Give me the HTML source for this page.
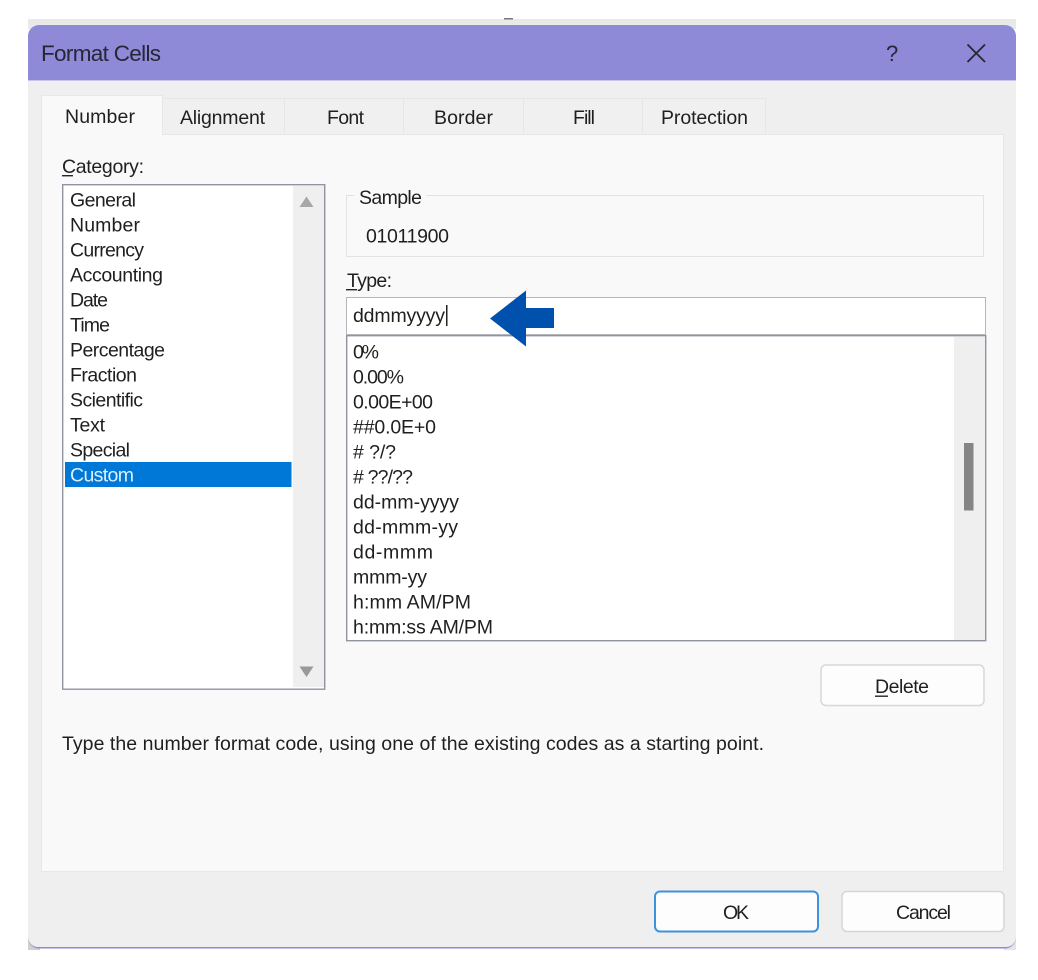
<!DOCTYPE html>
<html lang="en">
<head>
<meta charset="utf-8">
<title>Format Cells</title>
<style>
html,body{margin:0;padding:0;background:#fff;width:1038px;height:980px;overflow:hidden}
svg{display:block}
text{font-family:"Liberation Sans",Arial,sans-serif;font-size:19.5px;fill:#1f1f1f}
.t{filter:blur(.3px)}
</style>
</head>
<body>
<svg width="1038" height="980" viewBox="0 0 1038 980" xmlns="http://www.w3.org/2000/svg">
<!-- back strip -->
<rect x="28" y="19" width="988" height="10" fill="#e9e9e9"/>
<rect x="504" y="18" width="9" height="1.500" fill="#777"/>
<!-- dialog -->
<rect x="28" y="938" width="12" height="12" fill="#cfcfcf"/>
<rect x="1004" y="938" width="12" height="12" fill="#e4e4e4"/>
<rect x="28" y="25" width="988" height="923.500" rx="11" fill="#8f8ad8"/>
<path d="M28 80H1016V937a10 10 0 0 1-10 10H38a10 10 0 0 1-10-10Z" fill="#efefef"/>
<rect x="28" y="80" width="988" height="1" fill="#c9c6ec"/>
<!-- tab pane -->
<rect x="41.500" y="134.500" width="962" height="737" fill="#f9f9f9" stroke="#e8e8e8"/>
<!-- tabs -->
<g fill="#f0f0f0" stroke="#e6e6e6">
<rect x="162.500" y="98.500" width="122" height="36"/>
<rect x="284.500" y="98.500" width="119" height="36"/>
<rect x="403.500" y="98.500" width="120" height="36"/>
<rect x="523.500" y="98.500" width="119" height="36"/>
<rect x="642.500" y="98.500" width="123" height="36"/>
</g>
<path d="M42 136V95H162V136Z" fill="#f9f9f9"/>
<path d="M41.500 135V95.500H162.500V134" fill="none" stroke="#e8e8e8"/>
<!-- category list -->
<rect x="62.700" y="184.700" width="262" height="504.500" fill="#fff" stroke="#8f94a0" stroke-width="1.400"/>
<rect x="293" y="186" width="31" height="501" fill="#efefef"/>
<path d="M306.500 196.500L313.500 207H299.500Z" fill="#a8a8a8"/>
<path d="M299.500 666.500H313.500L306.500 677Z" fill="#999"/>
<rect x="65" y="462" width="226.500" height="25" fill="#0078d7"/>
<!-- sample -->
<rect x="346.500" y="195.500" width="637" height="61" fill="none" stroke="#e3e3e3"/>
<rect x="354" y="190" width="72" height="12" fill="#f9f9f9"/>
<!-- type input -->
<rect x="346.500" y="297.500" width="639" height="37" fill="#fff" stroke="#b5b7bc"/>
<rect x="446" y="305" width="1.500" height="21" fill="#222"/>
<!-- type list -->
<rect x="346.700" y="335.700" width="639" height="305" fill="#fff" stroke="#8f94a0" stroke-width="1.400"/>
<rect x="954" y="337" width="31" height="303" fill="#efefef"/>
<rect x="964" y="443" width="9.500" height="67.500" fill="#858585"/>
<!-- arrow -->
<path d="M490 318.500L526 290.500V308H554V328H526V346.500Z" fill="#0050ae"/>
<!-- buttons -->
<rect x="821" y="665" width="163" height="40.500" rx="5" fill="#fdfdfd" stroke="#d8d8d8" stroke-width="1.500"/>
<rect x="655" y="891.500" width="163" height="40" rx="5" fill="#fdfdfd" stroke="#3d92dc" stroke-width="2"/>
<rect x="842" y="891.500" width="162" height="40" rx="5" fill="#fdfdfd" stroke="#d6d6d6" stroke-width="1.500"/>
<!-- close icon -->
<path d="M967.500 44.500L985 62M985 44.500L967.500 62" fill="none" stroke="#262636" stroke-width="1.800"/>
<g class="t">
<text x="41" y="61" style="font-size:22.500px;fill:#262636" textLength="120" lengthAdjust="spacing">Format Cells</text>
<text x="886" y="61" style="font-size:22px;fill:#262636">?</text>
<text x="65" y="123" textLength="70" lengthAdjust="spacing">Number</text>
<text x="180" y="124" textLength="85" lengthAdjust="spacing">Alignment</text>
<text x="327" y="124" textLength="37" lengthAdjust="spacing">Font</text>
<text x="434" y="124" textLength="59" lengthAdjust="spacing">Border</text>
<text x="573" y="124" textLength="22" lengthAdjust="spacing">Fill</text>
<text x="661" y="124" textLength="87" lengthAdjust="spacing">Protection</text>
<text x="62" y="173" textLength="82" lengthAdjust="spacing">Category:</text>
<rect x="62" y="175" width="11" height="1.400" fill="#262626"/>

<text x="70" y="206.500" textLength="66" lengthAdjust="spacing">General</text>
<text x="70" y="231.500" textLength="70" lengthAdjust="spacing">Number</text>
<text x="70" y="256.500" textLength="74" lengthAdjust="spacing">Currency</text>
<text x="70" y="281.500" textLength="93" lengthAdjust="spacing">Accounting</text>
<text x="70" y="306.500" textLength="38" lengthAdjust="spacing">Date</text>
<text x="70" y="331.500" textLength="40" lengthAdjust="spacing">Time</text>
<text x="70" y="356.500" textLength="95" lengthAdjust="spacing">Percentage</text>
<text x="70" y="381.500" textLength="67" lengthAdjust="spacing">Fraction</text>
<text x="70" y="406.500" textLength="73" lengthAdjust="spacing">Scientific</text>
<text x="70" y="431.500" textLength="35" lengthAdjust="spacing">Text</text>
<text x="70" y="456.500" textLength="60" lengthAdjust="spacing">Special</text>
<text x="70" y="481.500" textLength="64" lengthAdjust="spacing" style="fill:#dcefff">Custom</text>

<text x="359" y="204" textLength="63" lengthAdjust="spacing">Sample</text>
<text x="366" y="242.500" textLength="83" lengthAdjust="spacing">01011900</text>
<text x="347" y="287" textLength="45" lengthAdjust="spacing">Type:</text>
<rect x="346" y="289" width="11" height="1.400" fill="#262626"/>
<text x="353" y="322" textLength="92" lengthAdjust="spacing">ddmmyyyy</text>

<text x="353" y="358.500" textLength="26" lengthAdjust="spacing">0%</text>
<text x="353" y="383.500" textLength="51" lengthAdjust="spacing">0.00%</text>
<text x="353" y="408.500" textLength="80" lengthAdjust="spacing">0.00E+00</text>
<text x="353" y="433.500" textLength="83" lengthAdjust="spacing">##0.0E+0</text>
<text x="353" y="458.500" textLength="43" lengthAdjust="spacing"># ?/?</text>
<text x="353" y="483.500" textLength="60" lengthAdjust="spacing"># ??/??</text>
<text x="353" y="508.500" textLength="106" lengthAdjust="spacing">dd-mm-yyyy</text>
<text x="353" y="533.500" textLength="105" lengthAdjust="spacing">dd-mmm-yy</text>
<text x="353" y="558.500" textLength="80" lengthAdjust="spacing">dd-mmm</text>
<text x="353" y="583.500" textLength="74" lengthAdjust="spacing">mmm-yy</text>
<text x="353" y="608.500" textLength="118" lengthAdjust="spacing">h:mm AM/PM</text>
<text x="353" y="633.500" textLength="140" lengthAdjust="spacing">h:mm:ss AM/PM</text>

<text x="875" y="693" textLength="54" lengthAdjust="spacing">Delete</text>
<rect x="875" y="695.500" width="13" height="1.400" fill="#262626"/>
<text x="62" y="750" textLength="702" lengthAdjust="spacing">Type the number format code, using one of the existing codes as a starting point.</text>
<text x="723" y="919" textLength="26" lengthAdjust="spacing">OK</text>
<text x="896" y="919" textLength="55" lengthAdjust="spacing">Cancel</text>
</g>
</svg>
</body>
</html>
